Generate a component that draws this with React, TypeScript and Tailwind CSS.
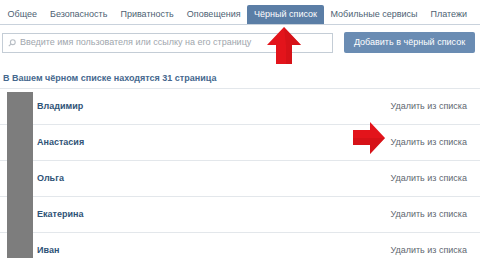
import React from 'react';

const tabs = ['Общее', 'Безопасность', 'Приватность', 'Оповещения', 'Чёрный список', 'Мобильные сервисы', 'Платежи'];
const people = ['Владимир', 'Анастасия', 'Ольга', 'Екатерина', 'Иван'];

const App = () => {
  return (
    <div className="relative w-[480px] h-[263px] overflow-hidden bg-white text-[9px]" style={{ fontFamily: '"Liberation Sans", Arial, sans-serif' }}>
      {/* tabs */}
      <div className="flex items-end h-[25px] pl-[1px] border-b border-[#c9d2dc] whitespace-nowrap">
        {tabs.map(t => (
          <div
            key={t}
            className={
              t === 'Чёрный список'
                ? 'h-[19px] px-[7px] flex items-center bg-[#5b7ea6] text-white rounded-t-[2px]'
                : 'h-[19px] px-[6.5px] flex items-center text-[#4e5f73]'
            }
          >
            {t}
          </div>
        ))}
      </div>

      {/* search + button */}
      <div className="flex items-center gap-[11px] mt-[7px] px-[2px]">
        <div className="w-[331px] h-[20px] border border-[#c4cdd6] flex items-center gap-[4px] px-[5px] text-[#a0a6ad]">
          <svg width="8" height="8" viewBox="0 0 10 10" fill="none" stroke="#b8bec5" strokeWidth="1.4">
            <circle cx="6" cy="4" r="3" />
            <path d="M4 6 L1 9" />
          </svg>
          <span>Введите имя пользователя или ссылку на его страницу</span>
        </div>
        <div className="w-[131px] h-[21px] bg-[#6a8cb3] rounded-[2px] flex items-center justify-center text-white">
          Добавить в чёрный список
        </div>
      </div>

      {/* header */}
      <div className="mt-[16px] h-[19px] px-[3px] flex items-center font-bold text-[#45688e]">
        В Вашем чёрном списке находятся 31 страница
      </div>

      {/* list */}
      <div className="border-t border-[#e3e7eb]">
        {people.map(p => (
          <div key={p} className="h-[36px] border-b border-[#e3e7eb] flex items-center justify-between pl-[37px] pr-[13px]">
            <span className="font-bold text-[#2f5377]">{p}</span>
            <span className="text-[#5f6770]">Удалить из списка</span>
          </div>
        ))}
      </div>

      {/* redacted avatars */}
      <div className="absolute left-[7px] top-[92px] w-[26px] h-[166px] bg-[#7d7d7d]" />

      {/* red arrows */}
      <svg className="absolute left-[266px] top-[26px]" width="36" height="38" viewBox="0 0 36 38">
        <polygon points="18,1 35,19 26,19 26,38 10,38 10,19 1,19" fill="#e3141b" />
        <polygon points="18,1 35,19 26,19 26,38 20,38 20,19" fill="#c90f16" opacity="0.5" />
      </svg>
      <svg className="absolute left-[352px] top-[121px]" width="34" height="34" viewBox="0 0 34 34">
        <polygon points="1,9 18,9 18,1 33,17 18,33 18,24 1,24" fill="#e3141b" />
        <polygon points="1,17 33,17 18,33 18,24 1,24" fill="#c90f16" opacity="0.5" />
      </svg>
    </div>
  );
};

export default App;
